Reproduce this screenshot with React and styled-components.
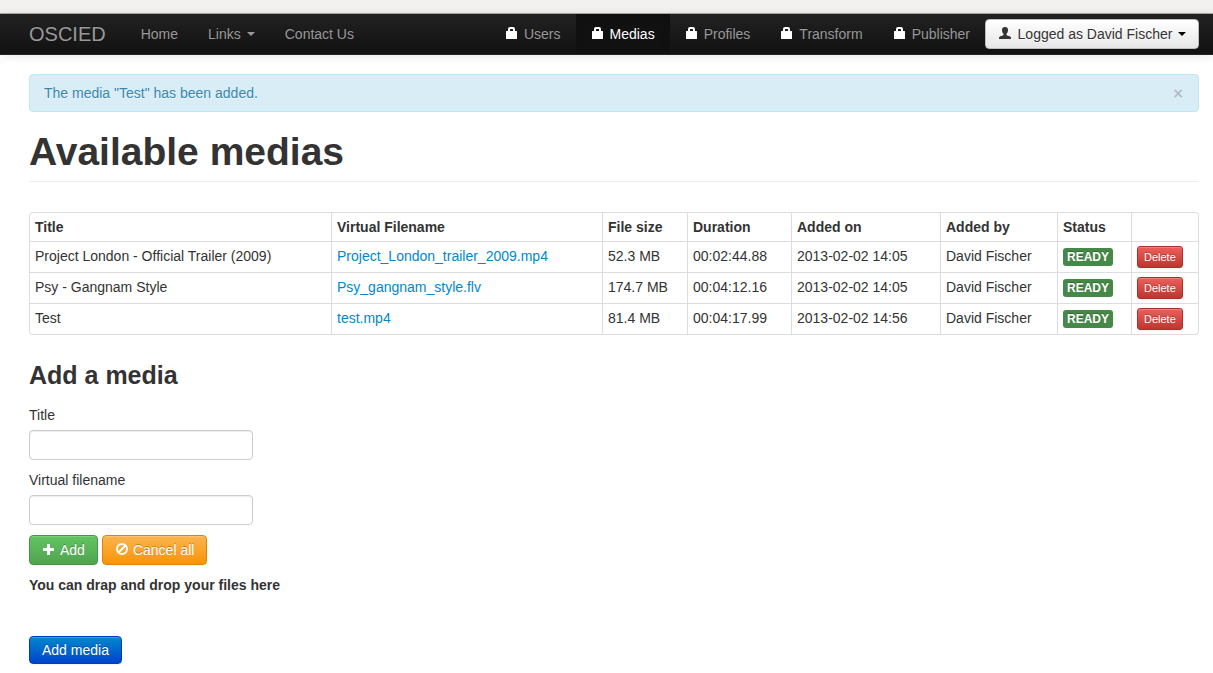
import React from "react";
import styled, { createGlobalStyle, css } from "styled-components";

const GlobalStyle = createGlobalStyle`
  *, *::before, *::after { box-sizing: border-box; }
  body {
    margin: 0;
    background: #fff;
    color: #333;
    font: 14px/20px "Liberation Sans", Arial, sans-serif;
  }
`;

const WindowEdge = styled.div`
  height: 14px;
  background: #f2f1f0;
  border-bottom: 1px solid #a9a8a7;
`;

const Navbar = styled.header`
  display: flex;
  justify-content: space-between;
  min-height: 41px;
  padding: 0 14px 0 29px;
  background: linear-gradient(#222, #111);
  border-bottom: 1px solid #252525;
  box-shadow: 0 1px 10px rgba(0, 0, 0, 0.1);
`;

const NavGroup = styled.nav`
  display: flex;
  align-items: stretch;
`;

const Brand = styled.a`
  padding: 10px 20px 10px 0;
  font-size: 20px;
  color: #999;
  text-decoration: none;
  text-shadow: 0 -1px 0 rgba(0, 0, 0, 0.25);
`;

const NavLink = styled.a`
  display: flex;
  align-items: center;
  gap: 5px;
  padding: 10px 15px;
  color: ${(p) => (p.$active ? "#fff" : "#999")};
  text-decoration: none;
  text-shadow: 0 -1px 0 rgba(0, 0, 0, 0.25);
  ${(p) =>
    p.$active &&
    css`
      background: #111;
      box-shadow: inset 0 3px 8px rgba(0, 0, 0, 0.125);
    `}
`;

const Caret = styled.span`
  border: 4px solid transparent;
  border-top-color: ${(p) => p.$color || "currentColor"};
  border-bottom: 0;
  margin-left: ${(p) => (p.$spaced ? "1px" : "0")};
`;

const Icon = styled.svg`
  flex: none;
  width: 14px;
  height: 14px;
  fill: currentColor;
`;

const NavIcon = styled(Icon)`
  color: #fff;
`;

const tones = {
  light: { from: "#fff", to: "#e6e6e6", edge: "#bbb", text: "#333" },
  success: { from: "#62c462", to: "#51a351", edge: "#499249", text: "#fff" },
  warning: { from: "#fbb450", to: "#f89406", edge: "#df8505", text: "#fff" },
  danger: { from: "#ee5f5b", to: "#bd362f", edge: "#aa302a", text: "#fff" },
  primary: { from: "#0088cc", to: "#0044cc", edge: "#003db8", text: "#fff" },
};

const Button = styled.button`
  display: inline-flex;
  align-items: center;
  gap: 4px;
  height: ${(p) => (p.$size === "mini" ? "22px" : p.$size === "submit" ? "28px" : "30px")};
  padding: ${(p) => (p.$size === "mini" ? "0 6px" : "0 12px")};
  font: inherit;
  font-size: ${(p) => (p.$size === "mini" ? "11px" : "14px")};
  line-height: 20px;
  color: ${(p) => tones[p.$tone].text};
  background: linear-gradient(${(p) => tones[p.$tone].from}, ${(p) => tones[p.$tone].to});
  border: 1px solid ${(p) => tones[p.$tone].edge};
  border-radius: ${(p) => (p.$size === "mini" ? "3px" : "4px")};
  box-shadow: inset 0 1px 0 rgba(255, 255, 255, 0.2), 0 1px 2px rgba(0, 0, 0, 0.05);
  text-shadow: ${(p) =>
    p.$tone === "light" ? "0 1px 1px rgba(255, 255, 255, 0.75)" : "0 -1px 0 rgba(0, 0, 0, 0.25)"};
  cursor: pointer;
`;

const AccountButton = styled(Button)`
  align-self: center;
  justify-content: space-between;
  min-width: 214px;
`;

const Page = styled.main`
  padding: 19px 14px 9px 29px;
`;

const Alert = styled.div`
  display: flex;
  justify-content: space-between;
  padding: 8px 14px;
  margin-bottom: 20px;
  color: #3a87ad;
  background: #d9edf7;
  border: 1px solid #bce8f1;
  border-radius: 4px;
  text-shadow: 0 1px 0 rgba(255, 255, 255, 0.5);
`;

const CloseButton = styled.button`
  padding: 0;
  border: 0;
  background: none;
  font: bold 14px/20px "DejaVu Sans", sans-serif;
  color: #000;
  opacity: 0.2;
  text-shadow: 0 1px 0 #fff;
  cursor: pointer;
`;

const PageTitle = styled.h1`
  margin: 0 0 30px;
  padding-bottom: 9px;
  border-bottom: 1px solid #eee;
  font-size: 39px;
  line-height: 40px;
`;

const MediaTable = styled.table`
  width: 100%;
  table-layout: fixed;
  margin-bottom: 20px;
  border: 1px solid #ddd;
  border-left: 0;
  border-radius: 4px;
  border-collapse: separate;
  border-spacing: 0;

  th, td {
    padding: 4px 5px;
    text-align: left;
    vertical-align: top;
    border-left: 1px solid #ddd;
  }
  td { border-top: 1px solid #ddd; }
  th:first-child { border-top-left-radius: 4px; }
  tr:last-child td:first-child { border-bottom-left-radius: 4px; }
`;

const HeadCell = styled.th`
  width: ${(p) => p.$width || "auto"};
`;

const FileLink = styled.a`
  color: #08c;
  text-decoration: none;
`;

const Status = styled.span`
  display: block;
  width: max-content;
  margin-top: 2px;
  padding: 2px 4px;
  border-radius: 3px;
  background: #468847;
  color: #fff;
  font-size: 12px;
  font-weight: bold;
  line-height: 14px;
  text-shadow: 0 -1px 0 rgba(0, 0, 0, 0.25);
`;

const DeleteButton = styled(Button)`
  display: flex;
`;

const SectionTitle = styled.h2`
  margin: 0 0 10px;
  font-size: 25px;
  line-height: 40px;
`;

const Field = styled.div`
  margin-bottom: 10px;
`;

const Label = styled.label`
  display: block;
  margin-bottom: 5px;
`;

const TextInput = styled.input`
  display: block;
  width: 224px;
  height: 30px;
  padding: 4px 6px;
  border: 1px solid #ccc;
  border-radius: 4px;
  background: #fff;
  box-shadow: inset 0 1px 1px rgba(0, 0, 0, 0.075);
  font: inherit;
  color: #555;
`;

const Actions = styled.div`
  display: flex;
  gap: 4px;
`;

const DropHint = styled.p`
  margin: 10px 0 41px;
  font-weight: bold;
`;

const LockIcon = () => (
  <NavIcon viewBox="0 0 14 14" aria-hidden="true">
    <path
      fillRule="evenodd"
      d="M1 4.500Q1 4 1.500 4H3V2Q3 0 5 0h3q2 0 2 2v2h1.500q.5 0 .5.5V12H1zM5 4h3V2.500Q8 2 7.500 2h-2Q5 2 5 2.500z"
    />
  </NavIcon>
);

const UserIcon = () => (
  <Icon viewBox="0 0 14 14" aria-hidden="true">
    <path d="M7 0c2 0 3 1 3 3 0 1.800-.7 2.800-1.300 3.600-.5.8-.3 1.600.5 1.900C11 9.100 13 9.400 13 11v1H1v-1c0-1.600 2-1.900 3.800-2.500.8-.3 1-1.100.5-1.900C4.700 5.800 4 4.800 4 3c0-2 1-3 3-3z" />
  </Icon>
);

const PlusIcon = () => (
  <Icon viewBox="0 0 14 14" aria-hidden="true">
    <path d="M5 1h3v4h4v3H8v4H5V8H1V5h4z" />
  </Icon>
);

const BanIcon = () => (
  <Icon viewBox="0 0 14 14" aria-hidden="true">
    <g fill="none" stroke="currentColor" strokeWidth="2">
      <circle cx="7" cy="6" r="5" />
      <path d="M3.500 9.500l7-7" />
    </g>
  </Icon>
);

const sections = ["Users", "Medias", "Profiles", "Transform", "Publisher"];

const columns = [
  { name: "Title" },
  { name: "Virtual Filename", width: "271px" },
  { name: "File size", width: "85px" },
  { name: "Duration", width: "104px" },
  { name: "Added on", width: "149px" },
  { name: "Added by", width: "117px" },
  { name: "Status", width: "74px" },
  { name: "", width: "67px" },
];

const medias = [
  {
    title: "Project London - Official Trailer (2009)",
    file: "Project_London_trailer_2009.mp4",
    size: "52.3 MB",
    duration: "00:02:44.88",
    added: "2013-02-02 14:05",
  },
  {
    title: "Psy - Gangnam Style",
    file: "Psy_gangnam_style.flv",
    size: "174.7 MB",
    duration: "00:04:12.16",
    added: "2013-02-02 14:05",
  },
  {
    title: "Test",
    file: "test.mp4",
    size: "81.4 MB",
    duration: "00:04:17.99",
    added: "2013-02-02 14:56",
  },
];

export default function App() {
  return (
    <>
      <GlobalStyle />
      <WindowEdge />
      <Navbar>
        <NavGroup>
          <Brand href="#">OSCIED</Brand>
          <NavLink href="#home">Home</NavLink>
          <NavLink href="#links">
            Links <Caret $spaced />
          </NavLink>
          <NavLink href="#contact">Contact Us</NavLink>
        </NavGroup>
        <NavGroup>
          {sections.map((name) => (
            <NavLink key={name} href={`#${name.toLowerCase()}`} $active={name === "Medias"}>
              <LockIcon />
              {name}
            </NavLink>
          ))}
          <AccountButton type="button" $tone="light">
            <UserIcon />
            Logged as David Fischer
            <Caret $color="#000" />
          </AccountButton>
        </NavGroup>
      </Navbar>
      <Page>
        <Alert role="status">
          The media "Test" has been added.
          <CloseButton type="button" aria-label="Close">×</CloseButton>
        </Alert>
        <PageTitle>Available medias</PageTitle>
        <MediaTable>
          <thead>
            <tr>
              {columns.map((c) => (
                <HeadCell key={c.name} $width={c.width}>
                  {c.name}
                </HeadCell>
              ))}
            </tr>
          </thead>
          <tbody>
            {medias.map((m) => (
              <tr key={m.file}>
                <td>{m.title}</td>
                <td>
                  <FileLink href={`#${m.file}`}>{m.file}</FileLink>
                </td>
                <td>{m.size}</td>
                <td>{m.duration}</td>
                <td>{m.added}</td>
                <td>David Fischer</td>
                <td>
                  <Status>READY</Status>
                </td>
                <td>
                  <DeleteButton type="button" $tone="danger" $size="mini">
                    Delete
                  </DeleteButton>
                </td>
              </tr>
            ))}
          </tbody>
        </MediaTable>
        <SectionTitle>Add a media</SectionTitle>
        <form onSubmit={(e) => e.preventDefault()}>
          <Field>
            <Label htmlFor="title">Title</Label>
            <TextInput id="title" type="text" />
          </Field>
          <Field>
            <Label htmlFor="filename">Virtual filename</Label>
            <TextInput id="filename" type="text" />
          </Field>
          <Actions>
            <Button type="button" $tone="success">
              <PlusIcon />
              Add
            </Button>
            <Button type="button" $tone="warning">
              <BanIcon />
              Cancel all
            </Button>
          </Actions>
          <DropHint>You can drap and drop your files here</DropHint>
          <Button type="submit" $tone="primary" $size="submit">
            Add media
          </Button>
        </form>
      </Page>
    </>
  );
}
